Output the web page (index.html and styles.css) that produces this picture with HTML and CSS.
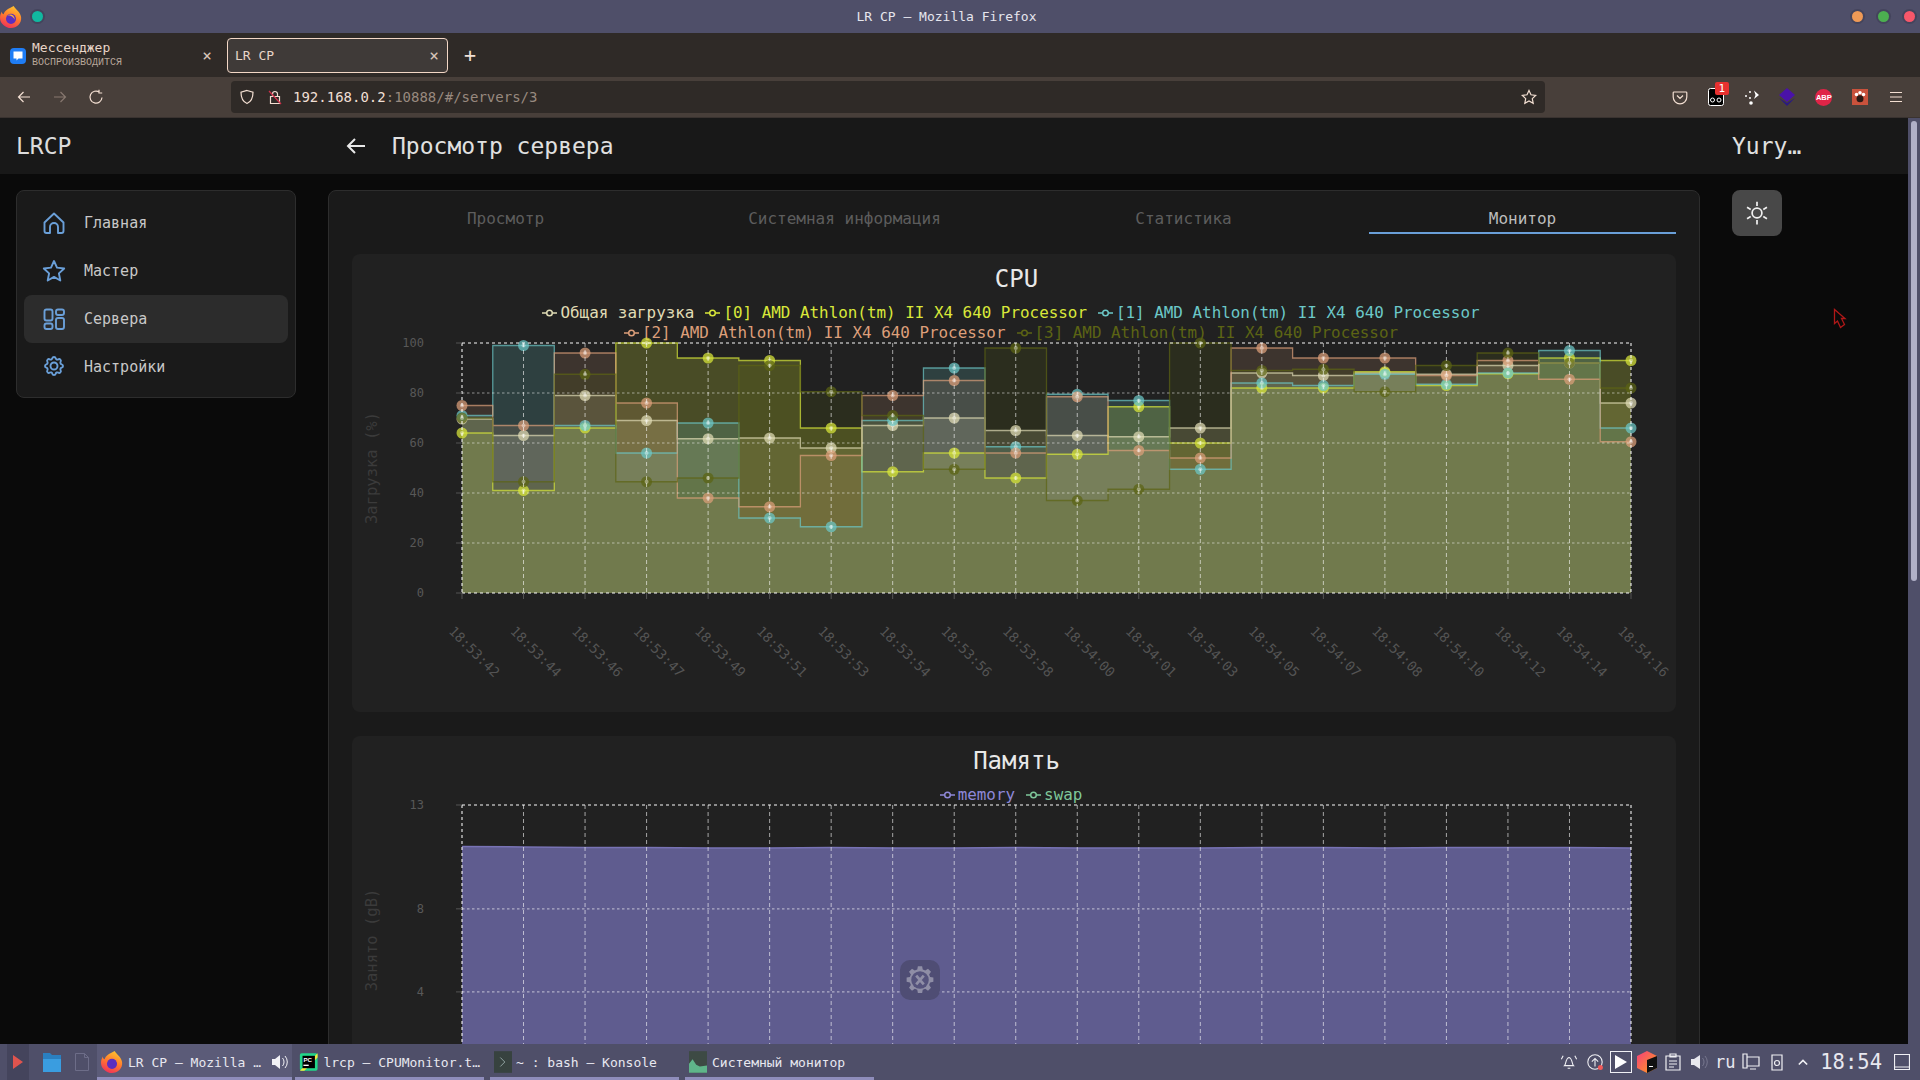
FILE: index.html
```html
<!DOCTYPE html>
<html lang="ru">
<head>
    <meta charset="UTF-8">
    <title>LR CP — Mozilla Firefox</title>
    <link rel="stylesheet" href="styles.css">
</head>
<body>
<div class="desktop">
    <!-- Window title -->
    <div class="titlebar">
        <div class="titlebar-left">
            <svg class="ff-logo" viewBox="0 0 24 24" width="22" height="24">
                <defs>
                    <linearGradient id="ff" x1="0.7" y1="0" x2="0.3" y2="1"><stop offset="0" stop-color="#ffc52e"/><stop offset="0.5" stop-color="#ff7a2e"/><stop offset="1" stop-color="#f0305a"/></linearGradient>
                </defs>
                <path d="M15 0c1 3 7 6 8 12 1 7-5 12-11 12S0 19 0 13c0-3 1-5 2-7 0 2 1 3 2 3 1-4 5-6 11-9z" fill="url(#ff)"/>
                <circle cx="12" cy="14" r="5.500" fill="#5b2fc0"/>
                <path d="M8 10c4-2 8 0 8 5-1-3-4-5-8-5z" fill="#ffb52e"/>
            </svg>
            <span class="win-dot dot-teal"></span>
        </div>
        <span class="titlebar-text">LR CP — Mozilla Firefox</span>
        <div class="titlebar-right">
            <span class="win-dot dot-orange"></span>
            <span class="win-dot dot-green"></span>
            <span class="win-dot dot-red"></span>
        </div>
    </div>

    <!-- Tabs -->
    <div class="tabstrip">
        <div class="tab">
            <svg class="tab-icon" viewBox="0 0 16 16" width="16" height="16">
                <rect width="16" height="16" rx="4" fill="#1f7df5"/>
                <path d="M3.500 3.500h9v7h-4l-2 2v-2h-3z" fill="#fff"/>
            </svg>
            <div class="tab-text">
                <span class="tab-title">Мессенджер</span>
                <span class="tab-sub">ВОСПРОИЗВОДИТСЯ</span>
            </div>
            <span class="tab-close">×</span>
        </div>
        <div class="tab tab-active">
            <span class="tab-title">LR CP</span>
            <span class="tab-close">×</span>
        </div>
        <span class="tab-new">+</span>
    </div>

    <!-- Toolbar -->
    <div class="toolbar">
        <div class="nav-buttons">
            <svg viewBox="0 0 16 16" width="16" height="16" class="tb-icon"><path d="M14 8H2.500M7.500 3l-5 5 5 5"/></svg>
            <svg viewBox="0 0 16 16" width="16" height="16" class="tb-icon tb-off"><path d="M2 8h11.500M8.500 3l5 5-5 5"/></svg>
            <svg viewBox="0 0 16 16" width="16" height="16" class="tb-icon"><path d="M14 8.500A6 6 0 1 1 11.500 3.200M11 .8v3.200h3.200"/></svg>
        </div>
        <div class="urlbar">
            <svg viewBox="0 0 16 16" width="16" height="16" class="tb-icon"><path d="M8 1.500l6 1.800c0 6-1.800 9.500-6 11.200-4.200-1.700-6-5.200-6-11.200z"/></svg>
            <svg viewBox="0 0 16 16" width="16" height="16" class="tb-icon lock"><path d="M3.500 7.500h9v7h-9zM5.500 7.500V5a2.500 2.500 0 0 1 5 0v2.500"/><path class="lock-strike" d="M2 2l12 13"/></svg>
            <span class="url"><span class="url-host">192.168.0.2</span>:10888/#/servers/3</span>
            <svg viewBox="0 0 16 16" width="16" height="16" class="tb-icon url-star"><path d="M8 1.500l2 4.300 4.700.6-3.400 3.200.9 4.700L8 12l-4.200 2.300.9-4.700L1.300 6.400 6 5.800z"/></svg>
        </div>
        <div class="extensions">
            <svg viewBox="0 0 16 16" width="16" height="16" class="tb-icon"><path d="M2 3h12a.800.800 0 0 1 .800.800V8a6.800 6.800 0 0 1-13.600 0V3.800A.800.800 0 0 1 2 3zM5 6.500l3 3 3-3"/></svg>
            <span class="ext ext-badge">
                <svg viewBox="0 0 16 18" width="16" height="18"><rect x=".5" y=".5" width="15" height="17" rx="2" fill="#000" stroke="#fff"/><circle cx="4.500" cy="12" r="2" fill="none" stroke="#fff"/><circle cx="11" cy="12" r="2" fill="none" stroke="#fff"/></svg>
                <span class="badge">1</span>
            </span>
            <svg viewBox="0 0 16 16" width="16" height="16"><circle cx="2" cy="7" r="1" fill="#fff"/><circle cx="6" cy="3" r="1" fill="#fff"/><circle cx="7" cy="14" r="1.800" fill="#fff"/><circle cx="6" cy="9" r="1" fill="#fff"/><path d="M10 1.500L15 6l-5 4 1.500-4z" fill="#fff"/></svg>
            <svg viewBox="0 0 16 18" width="16" height="18"><path d="M8 0l8 7-8 7-8-7z" fill="#4a12a8"/><path d="M0 10l8 8 8-8-8 5z" fill="#2a1a80"/></svg>
            <span class="ext-abp">ABP</span>
            <span class="ext-paw"><svg viewBox="0 0 16 16" width="14" height="14"><circle cx="4" cy="5" r="2" fill="#fff"/><circle cx="8" cy="3" r="2" fill="#fff"/><circle cx="12" cy="5" r="2" fill="#fff"/><circle cx="8" cy="10" r="4" fill="#2a1a16"/></svg></span>
            <svg viewBox="0 0 16 16" width="16" height="16" class="tb-icon"><path d="M2 3.500h12M2 8h12M2 12.500h12"/></svg>
        </div>
    </div>

    <!-- Page inside the browser -->
    <div class="page">
        <div class="page-content">
            <header class="app-header">
                <div class="brand">LRCP</div>
                <svg class="back-arrow" viewBox="0 0 24 24" width="24" height="24"><path d="M21 12H4M11 5l-7 7 7 7"/></svg>
                <div class="page-title">Просмотр сервера</div>
                <div class="user">Yury…</div>
            </header>

            <div class="layout">
                <nav class="sidebar">
                    <a class="nav-item">
                        <svg class="nav-icon" viewBox="0 0 24 24"><path d="M2.500 11.500 12 2.500l9.500 9V20a2 2 0 0 1-2 2H16v-6a4 4 0 0 0-8 0v6H4.500a2 2 0 0 1-2-2z"/></svg>
                        <span>Главная</span>
                    </a>
                    <a class="nav-item">
                        <svg class="nav-icon" viewBox="0 0 24 24"><path d="M12 2l3 6.600 7.200.9-5.300 4.900 1.400 7.100L12 17.900l-6.300 3.600 1.400-7.100L1.800 9.500 9 8.600z"/></svg>
                        <span>Мастер</span>
                    </a>
                    <a class="nav-item nav-active">
                        <svg class="nav-icon" viewBox="0 0 24 24"><rect x="2.500" y="2.500" width="8" height="11" rx="2"/><rect x="2.500" y="16.500" width="8" height="5.500" rx="2"/><rect x="14" y="2.500" width="8" height="5.500" rx="2"/><rect x="14" y="11" width="8" height="11" rx="2"/></svg>
                        <span>Сервера</span>
                    </a>
                    <a class="nav-item">
                        <svg class="nav-icon" viewBox="0 0 24 24"><path d="M10.325 3.317c.426-1.756 2.924-1.756 3.350 0a1.724 1.724 0 0 0 2.573 1.066c1.543-.94 3.310.826 2.370 2.370a1.724 1.724 0 0 0 1.065 2.572c1.756.426 1.756 2.924 0 3.350a1.724 1.724 0 0 0-1.066 2.573c.94 1.543-.826 3.310-2.370 2.370a1.724 1.724 0 0 0-2.572 1.065c-.426 1.756-2.924 1.756-3.350 0a1.724 1.724 0 0 0-2.573-1.066c-1.543.94-3.310-.826-2.370-2.370a1.724 1.724 0 0 0-1.065-2.572c-1.756-.426-1.756-2.924 0-3.350a1.724 1.724 0 0 0 1.066-2.573c-.94-1.543.826-3.310 2.370-2.370c1 .608 2.296.07 2.572-1.065z"/><circle cx="12" cy="11" r="3.500"/></svg>
                        <span>Настройки</span>
                    </a>
                </nav>

                <main class="main-card">
                    <div class="tabs">
                        <div class="tabs-item">Просмотр</div>
                        <div class="tabs-item">Системная информация</div>
                        <div class="tabs-item">Статистика</div>
                        <div class="tabs-item tabs-active">Монитор</div>
                    </div>

                    <section class="chart-card">
                        <h2 class="chart-title">CPU</h2>
                        <div class="legend" id="cpu-legend"></div>
                        <svg class="chart" id="cpu-chart" width="1324" height="369"></svg>
                    </section>

                    <section class="chart-card chart-card-memory">
                        <h2 class="chart-title">Память</h2>
                        <div class="legend legend-single" id="memory-legend"></div>
                        <svg class="chart" id="memory-chart" width="1324" height="370"></svg>
                        <div class="float-tool">
                            <svg viewBox="0 0 24 24" width="30" height="30">
                                <path d="M10.300 1h3.400l.5 2.600 2 .8 2.200-1.500 2.400 2.400-1.500 2.200.8 2 2.600.5v3.400l-2.600.5-.8 2 1.500 2.200-2.400 2.400-2.200-1.500-2 .8-.5 2.600h-3.400l-.5-2.600-2-.8-2.200 1.500-2.400-2.400 1.500-2.200-.8-2-2.600-.5v-3.400l2.600-.5.8-2-1.500-2.200 2.400-2.400 2.200 1.500 2-.8z" fill="#8f8ea6"/>
                                <circle cx="12" cy="12" r="7" fill="#55537c"/>
                                <path d="M9 8.500l6 7M15 8.500l-6 7" stroke="#8f8ea6" stroke-width="2.200" fill="none"/>
                            </svg>
                        </div>
                    </section>
                </main>

                <aside class="side-actions">
                    <button class="theme-button">
                        <svg viewBox="0 0 24 24" width="26" height="26"><circle cx="12" cy="12" r="4.500"/><path d="M12 1.500v4M12 18.500v4M2.800 6.800l3.400 2M17.800 15.200l3.400 2M2.800 17.200l3.400-2M17.800 8.800l3.400-2"/></svg>
                    </button>
                </aside>
            </div>

            <svg class="red-cursor" viewBox="0 0 14 22" width="14" height="22"><path d="M1.500 1.500v14l3-2.500 3 6.500 4-3-3-6h3.500z"/></svg>
        </div>
        <div class="scrollbar"><div class="scrollbar-thumb"></div></div>
    </div>

    <!-- Panel -->
    <div class="taskbar">
        <div class="launchers">
            <span class="launch-play"><svg viewBox="0 0 10 14" width="10" height="14"><path d="M0 0l10 7-10 7z" fill="#e0544e"/></svg></span>
            <svg viewBox="0 0 20 22" width="20" height="22"><path d="M1 2h7l2 2h9v17H1z" fill="#2a7fc0"/><path d="M1 8h18v13H1z" fill="#3a9de0"/></svg>
            <svg viewBox="0 0 14 18" width="14" height="18"><path d="M.5.500h9l4 4v13H.500zM9.500.500v4h4" fill="none" stroke="#6d6d88"/></svg>
        </div>
        <div class="tasks">
            <div class="task task-active">
                <svg viewBox="0 0 24 24" width="22" height="24"><path d="M15 0c1 3 7 6 8 12 1 7-5 12-11 12S0 19 0 13c0-3 1-5 2-7 0 2 1 3 2 3 1-4 5-6 11-9z" fill="url(#ff)"/><circle cx="12" cy="14" r="5.500" fill="#5b2fc0"/></svg>
                <span class="task-label">LR CP — Mozilla …</span>
                <svg class="task-sound" viewBox="0 0 18 18" width="18" height="18"><path d="M2 6h3l5-4v14l-5-4H2z" fill="#f2f2f6"/><path d="M12.500 5a6 6 0 0 1 0 8M15 3a9 9 0 0 1 0 12" fill="none" stroke="#f2f2f6"/></svg>
            </div>
            <div class="task">
                <svg viewBox="0 0 22 22" width="22" height="22"><rect x="1" y="1" width="20" height="20" rx="2" fill="#21d789"/><path d="M1 21L21 1v5L6 21z" fill="#f4e93a"/><rect x="4" y="4" width="14" height="14" fill="#000"/><text x="5" y="11" class="pc-mark">PC</text><rect x="5" y="14" width="6" height="1.500" fill="#fff"/></svg>
                <span class="task-label">lrcp — CPUMonitor.t…</span>
            </div>
            <div class="task task-narrow">
                <svg viewBox="0 0 20 24" width="18" height="22"><rect width="20" height="24" fill="#37423f"/><path d="M7 7l5 5-5 5" fill="none" stroke="#9aa" stroke-width="1"/></svg>
                <span class="task-label">~ : bash — Konsole</span>
            </div>
            <div class="task">
                <svg viewBox="0 0 20 24" width="18" height="22"><rect width="20" height="24" fill="#3d4a44"/><path d="M0 24V14l4-5 4 6 4 2 8-1v8z" fill="#5fb58a"/></svg>
                <span class="task-label">Системный монитор</span>
            </div>
        </div>
        <div class="tray">
            <div class="tray-slots">
                <span class="tray-slot"><svg viewBox="0 0 20 20" width="18" height="18" class="tray-icon"><path d="M5 14c2-2 1-8 5-9 4 1 3 7 5 9zM8.500 17h3M1.500 7l2-4M18.500 7l-2-4"/></svg></span>
                <span class="tray-slot"><svg viewBox="0 0 20 20" width="18" height="18" class="tray-icon"><circle cx="10" cy="10" r="8"/><path d="M10 15V6M6.500 9.500 10 6l3.500 3.500"/><circle cx="16" cy="16" r="2.800" class="tray-dot"/></svg></span>
                <span class="tray-slot"><span class="tray-play"><svg viewBox="0 0 12 14" width="12" height="14"><path d="M0 0l12 7-12 7z" fill="#fff"/></svg></span></span>
                <span class="tray-slot"><svg viewBox="0 0 20 22" width="20" height="22"><defs><linearGradient id="jb" x1="0" y1="0" x2="1" y2="1"><stop offset="0" stop-color="#f53e7b"/><stop offset="1" stop-color="#ffa319"/></linearGradient></defs><path d="M10 0l10 5v12l-10 5L0 17V5z" fill="url(#jb)"/><path d="M10 9l10-4v12l-10 5z" fill="#111"/><rect x="12" y="15" width="4" height="1" fill="#fff"/></svg></span>
                <span class="tray-slot"><svg viewBox="0 0 16 18" width="16" height="18" class="tray-icon"><path d="M1 3h14v14H1zM5 1h6v3H5zM4 8h8M4 11h8M4 14h5"/></svg></span>
                <span class="tray-slot"><svg viewBox="0 0 18 18" width="18" height="18"><path d="M1 6h3l6-4v14l-6-4H1z" fill="#e8e8ee"/><path d="M12.500 5a6 6 0 0 1 0 8M15 3a9 9 0 0 1 0 12" fill="none" stroke="#77778f"/></svg></span>
                <span class="tray-slot tray-lang">ru</span>
                <span class="tray-slot"><svg viewBox="0 0 18 18" width="18" height="18" class="tray-icon"><path d="M1 1h4v14H1zM5 4h12v9H5zM8 16h6"/></svg></span>
                <span class="tray-slot"><svg viewBox="0 0 12 18" width="12" height="18" class="tray-icon"><path d="M1 2h10v15H1z"/><circle cx="6" cy="10" r="2.500"/></svg></span>
                <span class="tray-slot"><svg viewBox="0 0 12 8" width="10" height="8" class="tray-icon tray-caret"><path d="M1 7l5-5 5 5"/></svg></span>
            </div>
            <span class="clock">18:54</span>
            <svg viewBox="0 0 16 16" width="16" height="16" class="tray-icon tray-desktop"><path d="M.5.500h15v15H.500zM.500 13h15"/></svg>
        </div>
    </div>
</div>
<script src="chart.js"></script>
</body>
</html>
```
FILE: styles.css
```css
* {
    box-sizing: border-box;
}
html, body {
    margin: 0;
    height: 100%;
    overflow: hidden;
}
body {
    background: #0a0a0a;
    font-family: "DejaVu Sans Mono", "Liberation Mono", monospace;
    color: #d0d0d0;
}
.desktop {
    display: flex;
    flex-direction: column;
    height: 100vh;
}

/* window title */
.titlebar {
    height: 33px;
    flex: none;
    display: flex;
    align-items: center;
    justify-content: space-between;
    padding: 0 5px 0 0;
    background: #4f4f69;
    position: relative;
}
.titlebar-left, .titlebar-right {
    display: flex;
    align-items: center;
}
.titlebar-left {
    gap: 10px;
}
.titlebar-right {
    gap: 15px;
}
.titlebar-text {
    font-size: 13px;
    color: #e6e6ee;
    position: absolute;
    left: 0;
    right: 27px;
    text-align: center;
}
.win-dot {
    width: 11px;
    height: 11px;
    border-radius: 50%;
    box-shadow: 0 0 0 2px #44445c;
}
.dot-teal { background: #11b8a0; }
.dot-orange { background: #ef9a56; }
.dot-green { background: #4caf50; }
.dot-red { background: #f8576a; }

/* tabs */
.tabstrip {
    height: 44px;
    flex: none;
    display: flex;
    align-items: center;
    background: #2f2a27;
    padding: 0 0 0 8px;
}
.tab {
    width: 219px;
    height: 35px;
    display: flex;
    align-items: center;
    padding-left: 2px;
    margin-top: 1px;
    color: #e8d5c8;
}
.tab-icon {
    margin-right: 6px;
}
.tab-text {
    display: flex;
    flex-direction: column;
    margin-top: -2px;
    line-height: 16px;
}
.tab-title {
    font-size: 13px;
}
.tab-sub {
    font-size: 10px;
    line-height: 13px;
    color: #b9a79b;
    font-family: "Liberation Mono", monospace;
}
.tab-close {
    margin-left: auto;
    margin-right: 15px;
    font-size: 16px;
    color: #d8c4b8;
}
.tab-active {
    width: 221px;
    border: 1px solid #f3d7c6;
    border-radius: 4px;
    background: #3f3a38;
    padding-left: 7px;
}
.tab-active .tab-close {
    margin-right: 8px;
}
.tab-new {
    margin-left: 16px;
    font-size: 20px;
    color: #f0e0d6;
}

/* toolbar */
.toolbar {
    height: 41px;
    flex: none;
    display: flex;
    align-items: center;
    background: #483f3a;
    border-bottom: 1px solid #3a3330;
}
.tb-icon {
    fill: none;
    stroke: #f3dfd2;
    stroke-width: 1.200;
}
.tb-off {
    stroke: #87786f;
}
.nav-buttons {
    width: 231px;
    padding-left: 16px;
    display: flex;
    gap: 20px;
}
.urlbar {
    width: 1314px;
    height: 32px;
    display: flex;
    align-items: center;
    padding: 0 8px;
    background: #2f2a27;
    border-radius: 4px;
}
.lock {
    margin-left: 12px;
}
.lock-strike {
    stroke: #d0304a;
}
.url {
    margin-left: 10px;
    font-size: 14px;
    color: #98897f;
}
.url-host {
    color: #f0dfd4;
}
.url-star {
    margin-left: auto;
}
.extensions {
    flex: 1;
    display: flex;
    align-items: center;
    justify-content: space-between;
    padding: 0 16px 0 127px;
}
.ext-badge {
    position: relative;
    display: flex;
}
.badge {
    position: absolute;
    top: -6px;
    right: -5px;
    width: 14px;
    height: 13px;
    background: #e8312f;
    border-radius: 2px;
    color: #fff;
    font-size: 11px;
    line-height: 13px;
    text-align: center;
}
.ext-abp {
    width: 17px;
    height: 17px;
    border-radius: 50%;
    background: #e02447;
    color: #fff;
    font-size: 7.500px;
    font-weight: bold;
    line-height: 17px;
    text-align: center;
    font-family: "Liberation Sans", sans-serif;
}
.ext-paw {
    width: 16px;
    height: 16px;
    background: #c9523c;
    display: flex;
    align-items: center;
    justify-content: center;
}

/* page */
.page {
    flex: 1;
    min-height: 0;
    display: flex;
}
.page-content {
    flex: 1;
    min-width: 0;
    overflow: hidden;
    position: relative;
}
.scrollbar {
    width: 12px;
    flex: none;
    background: #4f4f69;
    padding: 3px 3px 0;
}
.scrollbar-thumb {
    height: 460px;
    background: #b0b0c8;
    border-radius: 3px;
}
.app-header {
    height: 56px;
    display: flex;
    align-items: center;
    background: #181818;
    font-size: 23px;
    color: #e0e0e0;
}
.brand {
    width: 344px;
    padding-left: 16px;
    color: #dcdcdc;
}
.back-arrow {
    fill: none;
    stroke: #e8e8e8;
    stroke-width: 2;
    margin-right: 24px;
}
.page-title {
    flex: 1;
}
.user {
    width: 176px;
}
.layout {
    display: flex;
    align-items: flex-start;
    padding: 16px 0 0 16px;
}
.sidebar {
    width: 280px;
    flex: none;
    padding: 8px 7px 6px;
    background: #1a1a1a;
    border: 1px solid #2d2d2d;
    border-radius: 8px;
}
.nav-item {
    height: 48px;
    display: flex;
    align-items: center;
    gap: 18px;
    padding-left: 18px;
    border-radius: 8px;
    font-size: 15px;
    color: #c8c8c8;
}
.nav-active {
    background: #2c2c2c;
}
.nav-icon {
    width: 24px;
    height: 24px;
    fill: none;
    stroke: #6a9fd8;
    stroke-width: 1.900;
    stroke-linejoin: round;
}
.main-card {
    width: 1372px;
    flex: none;
    margin-left: 32px;
    padding: 0 24px;
    background: #1a1a1a;
    border: 1px solid #2d2d2d;
    border-radius: 8px;
}
.tabs {
    display: grid;
    grid-template-columns: repeat(4, 307px);
    gap: 32px;
    height: 44px;
    margin-left: -1px;
}
.tabs-item {
    font-size: 16px;
    line-height: 56px;
    height: 43px;
    text-align: center;
    color: #5d5d5d;
}
.tabs-active {
    color: #bdbdbd;
    border-bottom: 2px solid #6a9fd8;
}
.chart-card {
    margin: 19px 0 0 -1px;
    width: 1324px;
    padding-top: 9px;
    background: #212121;
    border-radius: 8px;
}
.chart-card-memory {
    margin-top: 24px;
    position: relative;
}
.chart-title {
    margin: 0;
    padding-left: 5px;
    font-size: 24px;
    font-weight: normal;
    line-height: 32px;
    text-align: center;
    color: #e8e8e8;
}
.legend {
    width: 1000px;
    margin: 8px 0 0 159px;
    display: flex;
    flex-wrap: wrap;
    justify-content: center;
    gap: 0 11px;
    height: 40px;
    font-size: 15.900px;
    line-height: 20px;
}
.legend-single {
    height: 20px;
}
.legend-item {
    display: flex;
    align-items: center;
    gap: 3px;
}
.chart {
    display: block;
    overflow: visible;
}
.axis-text {
    font-family: "DejaVu Sans Mono", "Liberation Mono", monospace;
    font-size: 12px;
    fill: #585858;
}
.axis-time {
    font-size: 13.500px;
    fill: #545454;
}
.axis-title {
    font-family: "DejaVu Sans Mono", "Liberation Mono", monospace;
    font-size: 15.500px;
    fill: #3b3b3b;
}
.float-tool {
    position: absolute;
    left: 548px;
    top: 224px;
    width: 40px;
    height: 40px;
    display: flex;
    align-items: center;
    justify-content: center;
    border-radius: 10px;
    background: #4f4d74;
}
.side-actions {
    margin-left: 32px;
}
.theme-button {
    width: 50px;
    height: 46px;
    padding: 0;
    display: flex;
    align-items: center;
    justify-content: center;
    border: none;
    border-radius: 8px;
    background: #484848;
}
.theme-button svg {
    fill: none;
    stroke: #f0f0f0;
    stroke-width: 1.600;
}
.red-cursor {
    position: absolute;
    left: 1833px;
    top: 190px;
    fill: none;
    stroke: #b01818;
    stroke-width: 1.300;
}

/* panel */
.taskbar {
    height: 36px;
    flex: none;
    display: flex;
    align-items: center;
    background: #4f4f69;
    font-size: 13px;
    color: #e8e8f0;
}
.launchers {
    width: 97px;
    flex: none;
    display: flex;
    align-items: center;
    gap: 13px;
    padding-left: 7px;
}
.launch-play {
    width: 22px;
    height: 36px;
    display: flex;
    align-items: center;
    justify-content: center;
    background: #44445c;
}
.tasks {
    display: flex;
    gap: 6px;
}
.task {
    width: 189px;
    height: 36px;
    display: flex;
    align-items: center;
    gap: 5px;
    padding: 0 4px;
    border-bottom: 3px solid #8f8dbb;
    border-top: 3px solid transparent;
    white-space: nowrap;
}
.task-active {
    width: 195px;
    margin-right: -3px;
    background: #5b5b78;
}
.task-narrow {
    gap: 4px;
}
.task-sound {
    margin-left: auto;
}
.pc-mark {
    font-family: "Liberation Sans", sans-serif;
    font-size: 7px;
    font-weight: bold;
    fill: #fff;
}
.tray {
    flex: 1;
    display: flex;
    align-items: center;
    justify-content: flex-end;
    padding-right: 10px;
}
.tray-slots {
    display: flex;
}
.tray-slot {
    width: 26px;
    display: flex;
    align-items: center;
    justify-content: center;
}
.tray-icon {
    fill: none;
    stroke: #f0f0f4;
    stroke-width: 1.200;
}
.tray-dot {
    fill: #f05a5a;
    stroke: none;
}
.tray-play {
    width: 22px;
    height: 22px;
    flex: none;
    display: flex;
    align-items: center;
    justify-content: center;
    border: 1px solid #f0f0f4;
}
.tray-lang {
    font-size: 17px;
}
.tray-caret {
    stroke-width: 2;
}
.clock {
    margin-left: 4px;
    font-size: 20.500px;
}
.tray-desktop {
    margin-left: 12px;
}
```
FILE: chart.js
```js
const X_LEFT = 110;
const X_RIGHT = 1279;
const TIMES = ['18:53:42', '18:53:44', '18:53:46', '18:53:47', '18:53:49', '18:53:51', '18:53:53', '18:53:54', '18:53:56', '18:53:58',
    '18:54:00', '18:54:01', '18:54:03', '18:54:05', '18:54:07', '18:54:08', '18:54:10', '18:54:12', '18:54:14', '18:54:16'];

const CPU_SERIES = [
    { name: 'Общая загрузка', color: '#e0dcb5', alpha: 0.19, data: [69.6, 63, 79, 69, 61.7, 62, 58, 67, 70, 65, 63, 62.5, 66, 88, 87, 88, 87.5, 91, 92, 76] },
    { name: '[0] AMD Athlon(tm) II X4 640 Processor', color: '#d9e83a', alpha: 0.22, data: [64, 41, 66, 100, 94, 93, 66, 48.5, 56, 46, 55.5, 74.5, 60, 82, 82, 88.5, 83, 87.7, 94, 93] },
    { name: '[1] AMD Athlon(tm) II X4 640 Processor', color: '#6cc8c8', alpha: 0.19, data: [71, 99, 67, 56, 68, 30, 26.5, 69, 90, 58.5, 79.5, 77, 49.5, 84, 83, 87.5, 83.5, 88, 97, 66] },
    { name: '[2] AMD Athlon(tm) II X4 640 Processor', color: '#dd9f7a', alpha: 0.15, data: [75, 67, 96, 76, 38, 34.5, 55, 79, 85, 56, 78.5, 57, 54, 98, 94, 94, 87, 93, 85.5, 60.5] },
    { name: '[3] AMD Athlon(tm) II X4 640 Processor', color: '#5c6414', alpha: 0.19, data: [70, 44.5, 87.5, 44.5, 46, 91, 80.5, 71, 49.5, 98, 37, 41.5, 100, 89, 89.5, 80.5, 91, 96, 92, 82] }
];

const MEMORY_SERIES = [
    { name: 'memory', color: '#8e88d8', fill: '#5f5c8f', line: '#7873b5', data: [11, 10.98, 10.95, 10.95, 10.93, 10.93, 10.95, 10.93, 10.93, 10.95, 10.93, 10.93, 10.93, 10.95, 10.95, 10.93, 10.95, 10.95, 10.95, 10.93] },
    { name: 'swap', color: '#7fc79a', data: [] }
];

function xAt(i) {
    return X_LEFT + i * (X_RIGHT - X_LEFT) / 19;
}

function node(parent, tag, attrs, text) {
    const el = document.createElementNS('http://www.w3.org/2000/svg', tag);
    for (const key in attrs) el.setAttribute(key, attrs[key]);
    if (text) el.textContent = text;
    parent.appendChild(el);
    return el;
}

function renderLegend(id, series) {
    const legend = document.getElementById(id);
    series.forEach(s => {
        const item = document.createElement('div');
        item.className = 'legend-item';
        item.style.color = s.color;
        item.innerHTML = '<svg width="15" height="8" viewBox="0 0 15 8"><path d="M0 4h4M11 4h4" stroke="currentColor" stroke-width="1.5"/><circle cx="7.500" cy="4" r="2.800" fill="none" stroke="currentColor" stroke-width="1.500"/></svg>';
        const label = document.createElement('span');
        label.textContent = s.name;
        item.appendChild(label);
        legend.appendChild(item);
    });
}

// Stepped line, the value changes half way between two points
function stepPath(data, yAt) {
    let d = 'M' + xAt(0) + ' ' + yAt(data[0]);
    for (let i = 1; i < data.length; i++) {
        const mid = (xAt(i - 1) + xAt(i)) / 2;
        d += 'H' + mid + 'V' + yAt(data[i]);
    }
    return d + 'H' + xAt(data.length - 1);
}

function smoothPath(data, yAt) {
    return data.map((v, i) => (i ? 'L' : 'M') + xAt(i) + ' ' + yAt(v)).join('');
}

function drawGrid(svg, yValues, yAt, bottom) {
    const vertical = { stroke: 'rgba(255,255,255,0.6)', 'stroke-width': 1, 'stroke-dasharray': '4 3' };
    const horizontal = { stroke: 'rgba(255,255,255,0.5)', 'stroke-width': 1.2, 'stroke-dasharray': '2.5 2.5' };
    const edge = { stroke: 'rgba(255,255,255,0.65)', 'stroke-width': 1.6, 'stroke-dasharray': '3 3' };
    for (let i = 0; i < 20; i++) {
        const style = (i === 0 || i === 19) ? edge : vertical;
        node(svg, 'line', Object.assign({ x1: xAt(i), x2: xAt(i), y1: yAt(yValues[0]), y2: bottom }, style));
    }
    yValues.forEach((v, i) => {
        const style = (i === 0 || v === 0) ? edge : horizontal;
        node(svg, 'line', Object.assign({ x1: X_LEFT, x2: X_RIGHT, y1: yAt(v), y2: yAt(v) }, style));
    });
}

function drawAxis(svg, yValues, yAt, title, titleY) {
    yValues.forEach(v => {
        node(svg, 'line', { x1: X_LEFT - 6, x2: X_LEFT, y1: yAt(v), y2: yAt(v), stroke: '#555' });
        node(svg, 'text', { x: 72, y: yAt(v) + 4, 'text-anchor': 'end', class: 'axis-text' }, String(v));
    });
    node(svg, 'text', {
        class: 'axis-title',
        'text-anchor': 'middle',
        transform: 'translate(25 ' + titleY + ') rotate(-90)'
    }, title);
}

function drawCpu() {
    const svg = document.getElementById('cpu-chart');
    const yAt = v => 250 - v * 2.5;

    CPU_SERIES.forEach(s => {
        const line = stepPath(s.data, yAt);
        node(svg, 'path', { d: line + 'V250H' + xAt(0) + 'Z', fill: s.color, 'fill-opacity': s.alpha });
    });
    CPU_SERIES.forEach(s => {
        node(svg, 'path', { d: stepPath(s.data, yAt), fill: 'none', stroke: s.color, 'stroke-opacity': 0.7, 'stroke-width': 1.3 });
    });
    CPU_SERIES.forEach(s => {
        s.data.forEach((v, i) => {
            node(svg, 'circle', { cx: xAt(i), cy: yAt(v), r: 5.5, fill: s.color, 'fill-opacity': 0.72 });
            node(svg, 'circle', { cx: xAt(i), cy: yAt(v), r: 2, fill: '#fff', 'fill-opacity': 0.4 });
        });
    });

    const yValues = [100, 80, 60, 40, 20, 0];
    drawGrid(svg, yValues, yAt, 250);
    for (let i = 0; i < 20; i++) {
        node(svg, 'line', { x1: xAt(i), x2: xAt(i), y1: 250, y2: 256, stroke: '#555' });
        node(svg, 'text', {
            class: 'axis-text axis-time',
            transform: 'translate(' + (xAt(i) - 14) + ' 289) rotate(45)'
        }, TIMES[i]);
    }
    drawAxis(svg, yValues, yAt, 'Загрузка (%)', 125);
}

function drawMemory() {
    const svg = document.getElementById('memory-chart');
    const yAt = v => 270 - v * 20.77;
    const mem = MEMORY_SERIES[0];
    const line = smoothPath(mem.data, yAt);
    node(svg, 'path', { d: line + 'V370H' + xAt(0) + 'Z', fill: mem.fill });
    node(svg, 'path', { d: line, fill: 'none', stroke: mem.line, 'stroke-width': 1.5 });
    // the 0 line sits below the fold of the page
    const yValues = [13, 8, 4];
    drawGrid(svg, yValues, yAt, 370);
    drawAxis(svg, yValues, yAt, 'Занято (gB)', 135);
}

renderLegend('cpu-legend', CPU_SERIES);
renderLegend('memory-legend', MEMORY_SERIES);
drawCpu();
drawMemory();
```
